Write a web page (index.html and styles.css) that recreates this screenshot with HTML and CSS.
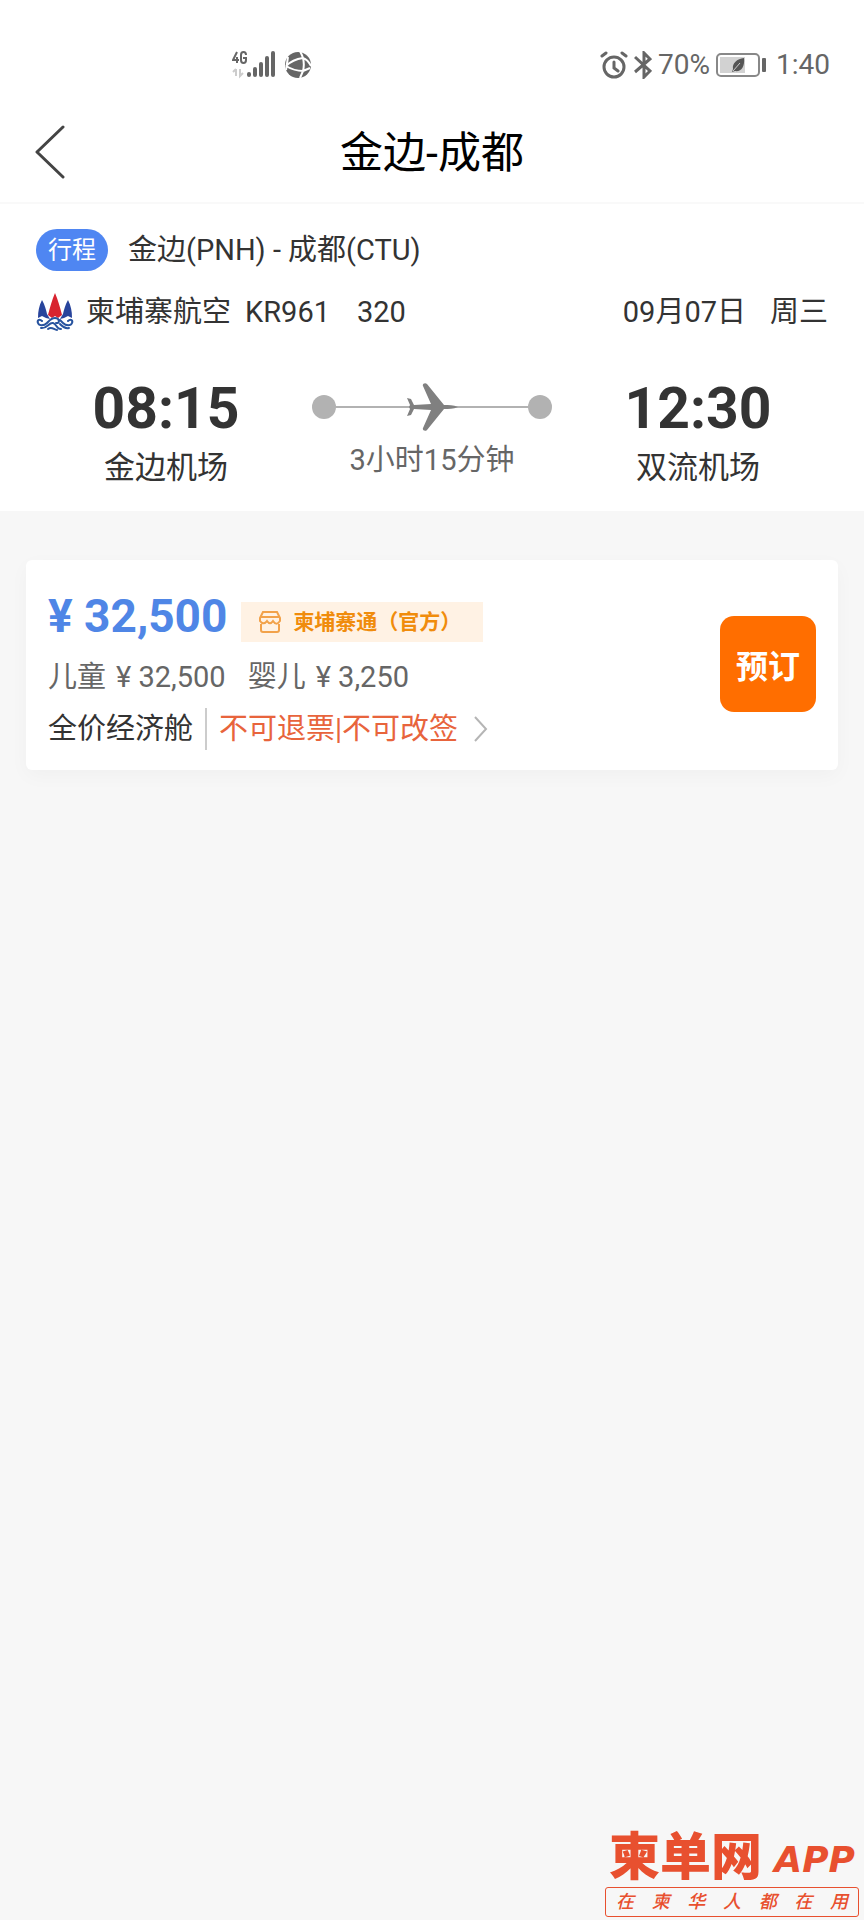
FILE: index.html
```html
<!doctype html>
<html lang="zh-cn">
<head>
    <meta charset="utf-8">
    <meta name="viewport" content="width=device-width, initial-scale=1" />
    <meta name="format-detection" content="telephone=no, address=no, email=no" /><!-- 忽略页面中的数字识别 -->
    <link rel="stylesheet" href="styles.css">
    <title>金边-成都</title>
</head>
<body>
    <!-- 状态栏 -->
    <div class="status">
        <div class="status-left">
            <svg width="44" height="30" viewBox="0 0 44 30" fill="#666">
                <g fill="none" stroke="#666" stroke-width="2">
                    <path d="M5 2L1 10h6M5 7v6"/>
                    <path d="M14 5c0-4-5-4-5 0v5c0 4 5 4 5 0V8h-3"/>
                </g>
                <path d="M4 19v7M1 22l3-3M8 19v7l3-3" fill="none" stroke="#ccc" stroke-width="2"/>
                <rect x="15" y="22" width="4" height="5" rx="2"/>
                <rect x="21" y="17" width="4" height="10" rx="2"/>
                <rect x="27" y="12" width="4" height="15" rx="2"/>
                <rect x="33" y="6" width="4" height="21" rx="2"/>
                <rect x="39" y="1" width="4" height="26" rx="2"/>
            </svg>
            <svg width="28" height="28" viewBox="0 0 28 28">
                <circle cx="14" cy="14" r="13" fill="#666"/>
                <path d="M2 15C6 11 12 8 19 7M16 0c1 2 2 4 3 7 1 4 1 9 0 13M2 15c5 3 11 5 17 5M19 7c3 1 6 4 8 8M19 20l7-3M19 20l-3 7M4 6l-2 13" fill="none" stroke="#fff" stroke-width="2"/>
            </svg>
        </div>
        <div class="status-right">
            <svg width="28" height="28" viewBox="0 0 28 28" fill="none" stroke="#666" stroke-width="3" stroke-linecap="round">
                <circle cx="14" cy="16" r="10"/>
                <path d="M14 11v6l4 3M2 5l4-3M26 5l-4-3"/>
            </svg>
            <svg width="18" height="28" viewBox="0 0 18 28" fill="none" stroke="#666" stroke-width="3">
                <path d="M1 6l15 14-6 6V2l6 6L1 21"/>
            </svg>
            <span>70%</span>
            <svg class="battery" width="50" height="24" viewBox="0 0 50 24">
                <rect x="1" y="1" width="42" height="22" rx="4" fill="#fff" stroke="#888" stroke-width="2"/>
                <rect x="4" y="4" width="25" height="16" fill="#d2d2d2"/>
                <path d="M28 5c1 9-3 14-9 13l-3 1 1-3c-1-6 4-10 11-11z" fill="#555"/>
                <path d="M17 18l7-8" stroke="#ccc"/>
                <rect x="46" y="5" width="4" height="14" rx="1" fill="#666"/>
            </svg>
            <span>1:40</span>
        </div>
    </div>

    <header class="navbar">
        <button class="back" type="button" aria-label="返回">
            <svg width="32" height="56" viewBox="0 0 32 56" fill="none" stroke="#444" stroke-width="3" stroke-linecap="round" stroke-linejoin="round">
                <path d="M29 2L3 27l26 25"/>
            </svg>
        </button>
        <h1>金边-成都</h1>
    </header>

    <!-- 行程信息 -->
    <section class="trip">
        <div class="trip-route">
            <span class="tag">行程</span>
            <span>金边(PNH) - 成都(CTU)</span>
        </div>
        <div class="trip-flight">
            <svg class="airline" width="38" height="38" viewBox="0 0 38 38">
                <path d="M19 0c3 7 5 14 7 22l-4 3-3-2-3 2-4-3c2-8 4-15 7-22z" fill="#d8232f"/>
                <path d="M6 7c3 5 4 10 5 14l3 5-4-1-4-2-4 2c0-7 1-12 4-18zM32 7c-3 5-4 10-5 14l-3 5 4-1 4-2 4 2c0-7-1-12-4-18z" fill="#28449c"/>
                <g fill="none" stroke="#28549f" stroke-width="2" stroke-linecap="round">
                    <path d="M6 28c-3-3-5 0-4 2 1 3 6 3 9 0 2-2 4-5 8-5 5 0 5 6 1 5M32 28c3-3 5 0 4 2-1 3-6 3-9 0l-3-3"/>
                    <path d="M5 35c6 1 8-6 12-5 4 1 3 6 8 6M33 35c-5 1-7-2-9-4M12 36c4-3 6 1 9 1"/>
                </g>
            </svg>
            <span class="airline-name">柬埔寨航空</span>
            <span class="flight-no">KR961</span>
            <span>320</span>
            <span class="date">09月07日</span>
            <span>周三</span>
        </div>
        <div class="trip-times">
            <div class="stop">
                <b>08:15</b>
                <span>金边机场</span>
            </div>
            <div class="duration">
                <svg width="240" height="48" viewBox="0 0 240 48">
                    <path d="M12 24h216" stroke="#b2b2b2" stroke-width="2"/>
                    <circle cx="12" cy="24" r="12" fill="#b2b2b2"/>
                    <circle cx="228" cy="24" r="12" fill="#b2b2b2"/>
                    <path d="M146 24c-5-2-9-2-14-2L115 1c-2-2-5 0-4 2l8 18-17 1-3-6-4-1 3 7-1 2 1 2-3 7 4-1 3-6 17 1-8 18c-1 2 2 4 4 2l17-21c5 0 9 0 14-2z" fill="#808080"/>
                </svg>
                <span>3小时15分钟</span>
            </div>
            <div class="stop">
                <b>12:30</b>
                <span>双流机场</span>
            </div>
        </div>
    </section>

    <!-- 报价 -->
    <main class="offers">
        <article class="offer">
            <div class="offer-info">
                <div class="offer-price">
                    <strong>¥ 32,500</strong>
                    <span class="seller">
                        <svg width="22" height="22" viewBox="0 0 22 22" fill="none" stroke="#f2a24a" stroke-width="2">
                            <path d="M4 1h14l3 6v3c-3 4-5 3-7 0-2 3-4 3-6 0-2 3-5 3-7 0V7zM1 6h20M2 13v6q0 2 2 2h14q2 0 2-2v-6"/>
                        </svg>
                        柬埔寨通（官方）
                    </span>
                </div>
                <div class="offer-extra">
                    <span>儿童</span><span>¥ 32,500</span>
                    <span class="infant">婴儿</span><span>¥ 3,250</span>
                </div>
                <div class="offer-rule">
                    <span class="cabin">全价经济舱</span>
                    <a class="rule" href="#">
                        不可退票|不可改签
                        <svg width="14" height="26" viewBox="0 0 14 26" fill="none" stroke="#b5b5b5" stroke-width="2">
                            <path d="M1 1l11 12L1 25"/>
                        </svg>
                    </a>
                </div>
            </div>
            <button class="book" type="button">预订</button>
        </article>
    </main>

    <footer class="brand">
        <div class="brand-name">
            <span>柬单网</span>
            <span class="brand-app">APP</span>
        </div>
        <div class="brand-slogan">在柬华人都在用</div>
    </footer>
</body>
</html>
```
FILE: styles.css
```css
html, body {
    height: 100%;
}
body {
    margin: 0;
    display: flex;
    flex-direction: column;
    background: #f7f7f7;
    color: #333;
    font-family: Roboto, "Noto Sans CJK SC", sans-serif;
    font-size: 29px;
    line-height: 42px;
}
svg {
    display: block;
    flex: none;
}
button {
    border: 0;
    padding: 0;
    font-family: inherit;
    cursor: pointer;
}

/* 状态栏 */
.status {
    display: flex;
    justify-content: space-between;
    align-items: center;
    height: 104px;
    padding: 26px 34px 0 232px;
    box-sizing: border-box;
    background: #fff;
    color: #666;
    font-size: 28px;
}
.status-left, .status-right {
    display: flex;
    align-items: center;
    gap: 8px;
}
.status-right {
    gap: 6px;
}
.battery {
    margin-right: 4px;
}

/* 导航 */
.navbar {
    display: grid;
    grid-template-columns: 1fr auto 1fr;
    align-items: center;
    height: 100px;
    padding: 0 34px;
    box-sizing: border-box;
    background: #fff;
    border-bottom: 2px solid #f9f9f9;
}
.navbar h1 {
    margin: 0;
    color: #000;
    font-size: 43px;
    font-weight: 400;
    line-height: 60px;
}
.back {
    justify-self: start;
    background: none;
}

/* 行程信息 */
.trip {
    padding: 25px 36px 22px;
    background: #fff;
}
.trip-route, .trip-flight {
    display: flex;
    align-items: center;
}
.trip-route {
    gap: 20px;
    margin-bottom: 20px;
}
.tag {
    padding: 0 12px;
    border-radius: 21px;
    background: #4f86f2;
    color: #fff;
    font-size: 24px;
    line-height: 42px;
}
.airline {
    margin-right: 12px;
}
.airline-name {
    margin-right: 14px;
}
.flight-no {
    margin-right: 27px;
}
.date {
    margin-left: auto;
    margin-right: 24px;
}
.trip-times {
    display: grid;
    grid-template-columns: 1fr 240px 1fr;
    gap: 16px;
    margin-top: 40px;
}
.stop, .duration {
    display: flex;
    flex-direction: column;
    align-items: center;
}
.stop {
    font-size: 31px;
}
.stop b {
    margin-bottom: 2px;
    font-size: 57px;
    line-height: 72px;
}
.duration {
    gap: 8px;
    padding-top: 10px;
    color: #666;
}

/* 报价 */
.offers {
    padding: 49px 26px;
}
.offer {
    display: flex;
    justify-content: space-between;
    align-items: flex-start;
    padding: 28px 22px 20px;
    border-radius: 6px;
    background: #fff;
    box-shadow: 0 6px 20px rgba(0, 0, 0, .03);
}
.offer-price, .offer-extra, .offer-rule, .rule, .seller {
    display: flex;
    align-items: center;
}
.offer-price {
    gap: 14px;
}
.offer-price strong {
    color: #4f86e6;
    font-size: 46px;
    line-height: 56px;
}
.seller {
    gap: 12px;
    padding: 0 22px 0 18px;
    margin-top: 12px;
    background: #fff2e4;
    color: #f08c0c;
    font-size: 21px;
    font-weight: 700;
    line-height: 40px;
}
.offer-extra {
    gap: 10px;
    margin: 12px 0 10px;
    color: #666;
}
.infant {
    margin-left: 12px;
}
.cabin {
    padding-right: 12px;
    border-right: 2px solid #ccc;
}
.rule {
    gap: 16px;
    padding-left: 12px;
    color: #e8643c;
    text-decoration: none;
}
.book {
    width: 96px;
    height: 96px;
    margin-top: 28px;
    border-radius: 14px;
    background: #ff6e00;
    color: #fff;
    font-size: 32px;
    font-weight: 700;
}

/* 底部品牌 */
.brand {
    align-self: flex-end;
    width: 254px;
    margin: auto 5px 3px 0;
    color: #e8502f;
}
.brand-name {
    display: flex;
    justify-content: space-between;
    align-items: center;
    padding: 0 4px;
    font-size: 51px;
    font-weight: 900;
    line-height: 54px;
}
.brand-app {
    padding-top: 4px;
    font-family: "DejaVu Sans", sans-serif;
    font-size: 36px;
    font-style: italic;
    font-weight: 700;
}
.brand-slogan {
    padding: 0 10px;
    border: 1px solid #e8502f;
    border-radius: 3px;
    font-size: 18px;
    font-style: italic;
    font-weight: 500;
    line-height: 28px;
    text-align-last: justify;
}
```
